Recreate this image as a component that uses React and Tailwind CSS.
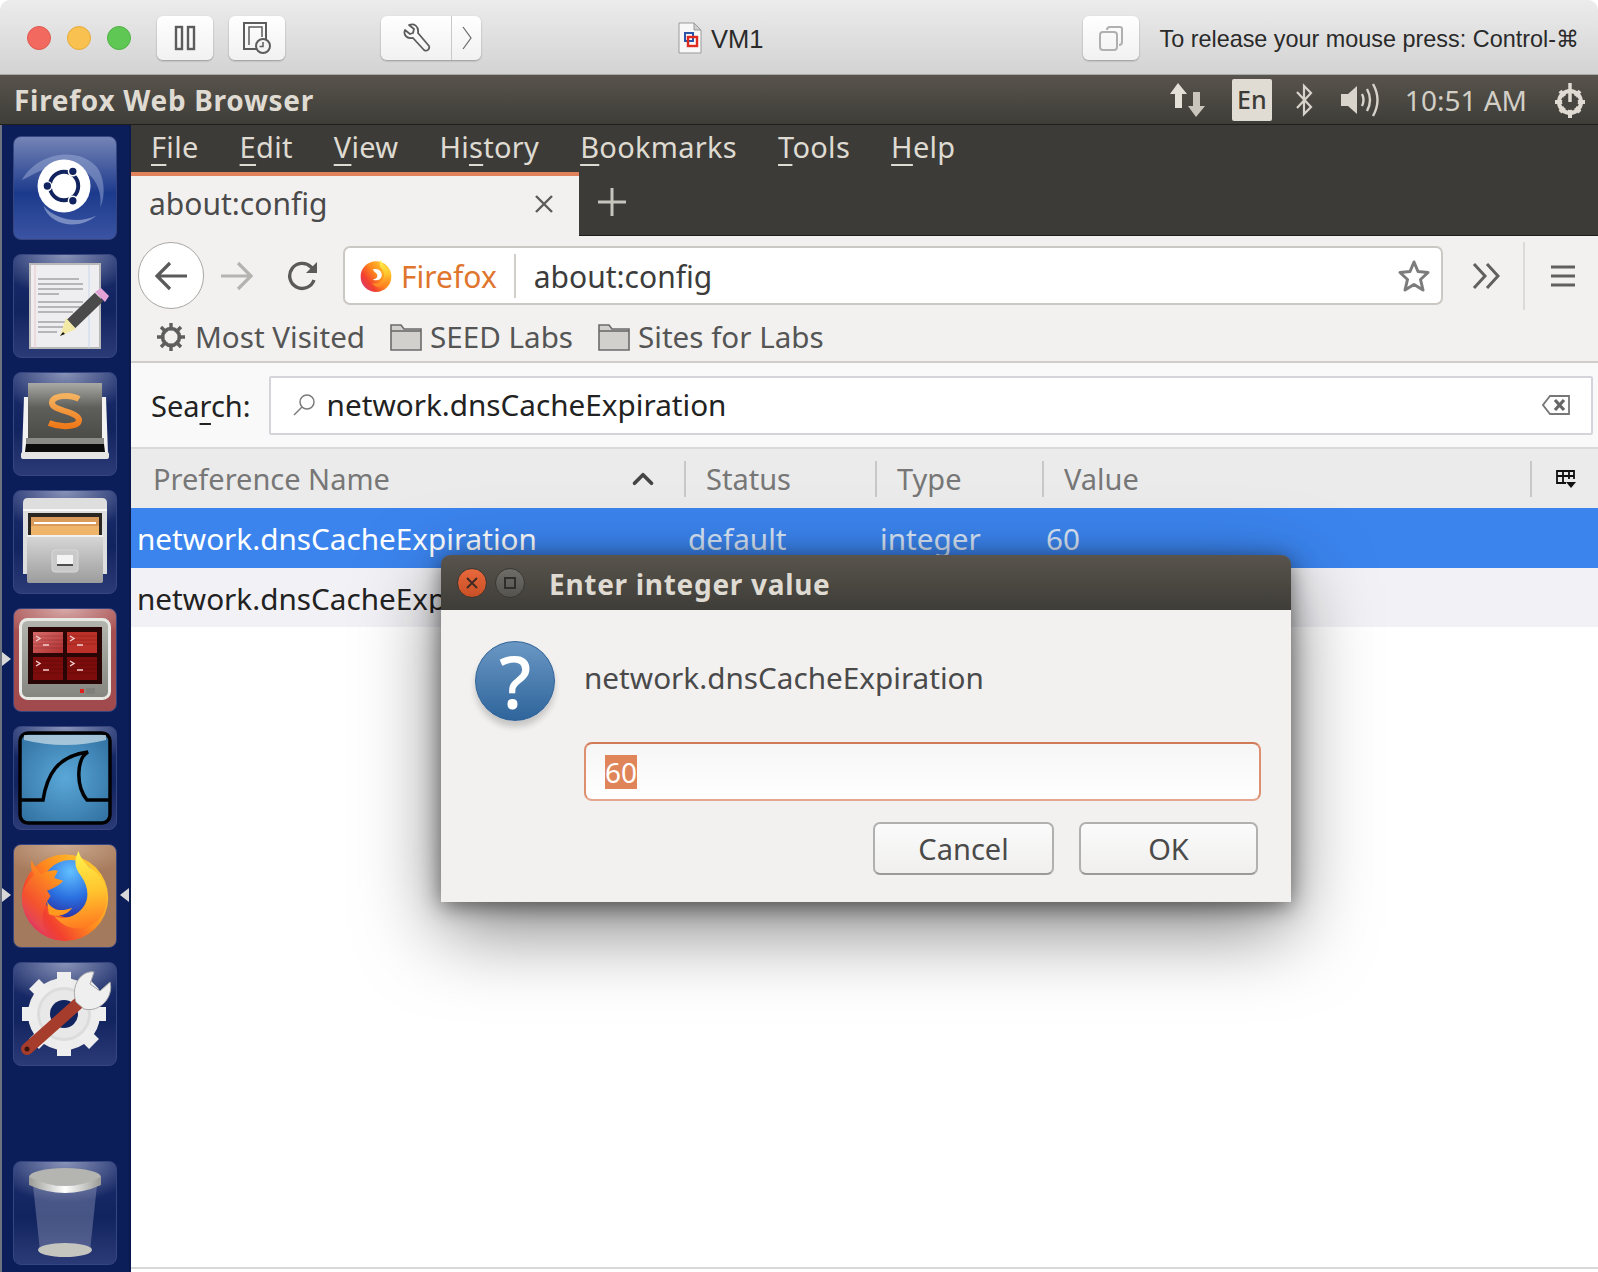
import { ChevronUp } from 'lucide-react';

const Mnemonic = ({ children }) => (
  <span className="underline decoration-2 underline-offset-[6px]">{children}</span>
);

const MacButton = ({ children, className = 'w-[56px]' }) => (
  <div className={`h-[44px] rounded-[6px] bg-gradient-to-b from-[#ffffff] to-[#f1f1f1] shadow-[0_1px_2px_rgba(0,0,0,0.3)] flex items-center justify-center ${className}`}>
    {children}
  </div>
);

// Firefox logo, also used small in the url bar
const FirefoxLogo = ({ size, id, small }) => (
  <svg width={size} height={size} viewBox="0 0 100 100">
    <defs>
      <radialGradient id={`${id}-globe`} cx="0.5" cy="0.2" r="0.85">
        <stop offset="0" stopColor="#62c0ff" />
        <stop offset="0.55" stopColor="#2a6fe0" />
        <stop offset="1" stopColor="#2b2a9c" />
      </radialGradient>
      <linearGradient id={`${id}-disc`} x1="0.95" y1="0.35" x2="0.15" y2="0.95">
        <stop offset="0" stopColor="#ffc42e" />
        <stop offset="0.4" stopColor="#ff8a1e" />
        <stop offset="0.75" stopColor="#f2402f" />
        <stop offset="1" stopColor="#dd3a6a" />
      </linearGradient>
      <linearGradient id={`${id}-fox`} x1="0.7" y1="0.1" x2="0.2" y2="1">
        <stop offset="0" stopColor="#ff9a1e" />
        <stop offset="0.6" stopColor="#f4522e" />
        <stop offset="1" stopColor="#d93a74" />
      </linearGradient>
      <linearGradient id={`${id}-tail`} x1="0.4" y1="0" x2="0.5" y2="1">
        <stop offset="0" stopColor="#fff44f" />
        <stop offset="0.55" stopColor="#ffc42e" />
        <stop offset="1" stopColor="#ff7a20" />
      </linearGradient>
    </defs>
    <circle cx="50" cy="52" r="48" fill={`url(#${id}-disc)`} />
    {small ? (
      <path fill="#fff" d="M40 30 C56 24 70 36 68 50 C66 62 50 68 40 60 C50 60 56 54 54 46 C50 40 44 38 40 30 Z" />
    ) : (
      <circle cx="56" cy="42" r="32" fill={`url(#${id}-globe)`} />
    )}
    <path
      fill={`url(#${id}-tail)`}
      d="M65 0 C60 10 60 18 68 28 C78 42 78 60 62 70 C54 75 44 76 38 72 C52 92 80 90 92 70 C102 50 94 30 82 22 C74 16 68 10 65 0 Z"
    />
    {!small && (
      <>
        <path
          fill={`url(#${id}-fox)`}
          d="M13 10 C11 17 13 22 16 26 C6 35 2 45 2 52 C2 66 12 82 30 92 C22 78 24 64 34 50 L30 44 C36 42 44 38 48 33 L38 30 L42 22 C34 20 28 24 24 26 C20 22 15 16 13 10 Z"
        />
        <path fill="#ff9a1e" d="M30 56 C36 66 46 68 58 63 C52 72 40 74 32 70 Z" />
      </>
    )}
  </svg>
);

const Tile = ({ children, className = 'bg-[radial-gradient(ellipse_70%_40%_at_50%_0%,rgba(205,210,230,0.62),rgba(205,210,230,0)_100%),linear-gradient(#1a2c6c,#12245f_55%,#2b3b77)]' }) => (
  <div className={`w-[104px] h-[104px] rounded-[8px] border border-[#36447f] flex items-center justify-center shrink-0 overflow-hidden ${className}`}>
    {children}
  </div>
);

const Launcher = () => (
  <div className="relative w-[131px] shrink-0 bg-[#0b1e5a] border-l-2 border-l-[#6d7280] border-r-2 border-r-[#0a1a4c] flex flex-col items-center pt-[11px] pb-[7px] gap-[14px] pr-[2px]">
    {/* dash */}
    <Tile className="bg-[linear-gradient(#7584b6,#1c3a8c_55%,#3b54a3)]">
      <svg width="104" height="104" viewBox="0 0 104 104">
        <path d="M8 44C22 18 62 8 84 30C92 40 94 58 88 72C92 42 66 22 38 30C26 34 16 40 8 44Z" fill="#a9b8de" opacity="0.45" />
        <path d="M30 70C36 90 66 96 84 80C68 88 44 86 30 70Z" fill="#b4c2e4" opacity="0.55" />
        <circle cx="51" cy="50" r="27" fill="#fff" />
        <circle cx="51" cy="50" r="14.5" fill="none" stroke="#12245f" strokeWidth="4" />
        <circle cx="34" cy="50" r="4.5" fill="#12245f" stroke="#fff" strokeWidth="1.5" />
        <circle cx="60" cy="35" r="4.5" fill="#12245f" stroke="#fff" strokeWidth="1.5" />
        <circle cx="60" cy="65" r="4.5" fill="#12245f" stroke="#fff" strokeWidth="1.5" />
      </svg>
    </Tile>
    {/* text editor */}
    <Tile>
      <svg width="88" height="88" viewBox="0 0 88 88">
        <rect x="9" y="2" width="70" height="84" fill="#eeeef0" stroke="#b8b8b8" strokeWidth="2" />
        <path d="M14 3V86" stroke="#eec4c8" strokeWidth="1" />
        <path d="M68 3V86" stroke="#ccd6ee" strokeWidth="1" />
        <path d="M17 17H58M17 22H62M17 27H62M17 32H38M17 40H62M17 45H60M17 50H52M17 60H46M17 65H42M17 70H36" stroke="#a4a4a8" strokeWidth="1.6" />
        <path d="M78 35L50 62" stroke="#4a4a4a" strokeWidth="12" />
        <path d="M74 30L84 40L88 34L80 26Z" fill="#e4a3d6" />
        <path d="M45 56L55 67L39 74Z" fill="#f1e9a4" />
        <path d="M42 70L44 72L39 74Z" fill="#111" />
      </svg>
    </Tile>
    {/* sublime text */}
    <Tile>
      <svg width="92" height="92" viewBox="0 0 92 92">
        <defs>
          <linearGradient id="sublime-top" x1="0" y1="0" x2="0" y2="1">
            <stop offset="0" stopColor="#a9a9a5" />
            <stop offset="0.45" stopColor="#5e5e5a" />
            <stop offset="1" stopColor="#4b4b48" />
          </linearGradient>
          <linearGradient id="sublime-s" x1="0" y1="0" x2="0" y2="1">
            <stop offset="0" stopColor="#f4b25f" />
            <stop offset="1" stopColor="#f07a1a" />
          </linearGradient>
        </defs>
        <path d="M5 19H87L89 76H3Z" fill="#f2f2f2" />
        <rect x="2" y="74" width="88" height="7" rx="2" fill="#e4e4e4" />
        <rect x="9" y="5" width="74" height="55" fill="url(#sublime-top)" />
        <path d="M7 60H85V66H7Z" fill="#8a8a86" />
        <path d="M7 66H85L86 74H6Z" fill="#0c0c0c" />
        <path d="M60 21C52 16 33 17 33 25C33 33 59 33 60 42C60 49 42 50 30 45" fill="none" stroke="url(#sublime-s)" strokeWidth="6" />
      </svg>
    </Tile>
    {/* file manager */}
    <Tile>
      <svg width="88" height="92" viewBox="0 0 88 92">
        <defs>
          <linearGradient id="drawer-body" x1="0" y1="0" x2="0" y2="1">
            <stop offset="0" stopColor="#d8d8d8" />
            <stop offset="1" stopColor="#9c9c9c" />
          </linearGradient>
        </defs>
        <path d="M2 7Q2 2 7 2H81Q86 2 86 7V78H2Z" fill="#dedede" />
        <rect x="2" y="13" width="84" height="2" fill="#f8f8f8" />
        <rect x="7" y="17" width="74" height="22" fill="#2a2622" />
        <rect x="10" y="21" width="68" height="18" fill="#d99a5a" />
        <rect x="10" y="30" width="68" height="9" fill="#eeb56a" />
        <rect x="13" y="26" width="62" height="2" fill="#fff" />
        <rect x="6" y="39" width="76" height="48" rx="2" fill="url(#drawer-body)" />
        <rect x="6" y="39" width="76" height="2" fill="#f0f0f0" />
        <rect x="31" y="54" width="26" height="22" rx="3" fill="#c9c9c9" stroke="#d8d8d8" />
        <rect x="36" y="59" width="16" height="11" fill="#f4f4f4" />
        <rect x="36" y="68" width="16" height="2" fill="#4e4e4e" />
      </svg>
    </Tile>
    {/* terminal */}
    <Tile className="bg-[radial-gradient(ellipse_70%_30%_at_50%_0%,#d7a9a9,rgba(215,169,169,0)_100%),linear-gradient(#a85050,#a04a4e)]">
      <svg width="92" height="84" viewBox="0 0 92 84">
        <defs>
          <linearGradient id="term-a" x1="0" y1="0" x2="1" y2="1">
            <stop offset="0" stopColor="#d86a6a" />
            <stop offset="1" stopColor="#b03030" />
          </linearGradient>
          <linearGradient id="term-frame" x1="0" y1="0" x2="0" y2="1">
            <stop offset="0" stopColor="#b5b5b0" />
            <stop offset="1" stopColor="#85857f" />
          </linearGradient>
        </defs>
        <rect x="1.5" y="1.5" width="89" height="79" rx="7" fill="url(#term-frame)" stroke="#e8e8e4" strokeWidth="3" />
        <rect x="9" y="9" width="74" height="57" fill="#2a0505" />
        <rect x="14" y="14" width="30" height="21" fill="url(#term-a)" />
        <rect x="48" y="14" width="30" height="21" fill="#bb3028" />
        <rect x="14" y="39" width="30" height="23" fill="#7d0d0d" />
        <rect x="48" y="39" width="30" height="23" fill="#7d0d0d" />
        <path d="M14 18H44M14 22H44M14 26H44M14 30H44M48 18H78M48 22H78M48 26H78M14 43H44M14 47H44M14 51H44M14 55H44M48 43H78M48 47H78M48 51H78M48 55H78" stroke="#000" strokeWidth="1" opacity="0.15" />
        <path d="M17 18L21 20.5L17 23M24 27H30M51 18L55 20.5L51 23M58 27H64M17 43L21 45.5L17 48M24 52H30M51 43L55 45.5L51 48M58 52H64" fill="none" stroke="#f5d0d0" strokeWidth="1.4" />
        <rect x="61" y="71" width="4" height="4" fill="#e32020" />
        <rect x="67" y="70" width="9" height="6" fill="#7e7e7a" />
      </svg>
    </Tile>
    {/* wireshark */}
    <Tile>
      <svg width="96" height="96" viewBox="0 0 96 96">
        <defs>
          <radialGradient id="shark-bg" cx="0.5" cy="0.5" r="0.7">
            <stop offset="0" stopColor="#5aa8d8" />
            <stop offset="1" stopColor="#2f6e9e" />
          </radialGradient>
        </defs>
        <rect x="3" y="3" width="90" height="90" rx="8" fill="url(#shark-bg)" stroke="#000" strokeWidth="3.5" />
        <path d="M7 5H89V10Q48 20 7 10Z" fill="#cfe0ea" opacity="0.7" />
        <path d="M3 70H26C30 45 40 26 71 22C60 28 58 55 70 70H93" fill="none" stroke="#000" strokeWidth="3.5" />
      </svg>
    </Tile>
    {/* firefox, the running app */}
    <Tile className="bg-[radial-gradient(ellipse_70%_30%_at_50%_0%,#cba98f,rgba(203,169,143,0)_100%),linear-gradient(#a87b5c,#a37a5e)]">
      <FirefoxLogo size={90} id="launcher-fx" />
    </Tile>
    {/* system settings */}
    <Tile>
      <svg width="94" height="94" viewBox="0 0 94 94">
        <circle cx="46" cy="47" r="26" fill="none" stroke="#ececec" strokeWidth="20" />
        <path d="M46 47L46 5M46 47L46 89M46 47L4 47M46 47L88 47M46 47L16 17M46 47L76 77M46 47L16 77M46 47L76 17" stroke="#eeeeee" strokeWidth="14" />
        <circle cx="46" cy="47" r="27" fill="#dcdcdc" />
        <circle cx="46" cy="47" r="24" fill="#e8e8e8" />
        <circle cx="46" cy="47" r="14" fill="#12245f" />
        <path d="M9 82L64 33" stroke="#a63c2b" strokeWidth="12" strokeLinecap="round" />
        <circle cx="9" cy="82" r="2.5" fill="#3a1510" />
        <path d="M58 35C52 18 64 3 76 5L72 17L82 24L92 15C96 30 82 46 66 42Z" fill="#efefef" stroke="#a8a8a8" />
      </svg>
    </Tile>
    <div className="flex-1" />
    {/* trash */}
    <Tile>
      <svg width="80" height="96" viewBox="0 0 80 96">
        <defs>
          <linearGradient id="trash-band" x1="0" y1="0" x2="1" y2="0">
            <stop offset="0" stopColor="#9a9a96" />
            <stop offset="0.5" stopColor="#ffffff" />
            <stop offset="1" stopColor="#9a9a96" />
          </linearGradient>
        </defs>
        <path d="M8 20H72L65 86H15Z" fill="#aab0cc" opacity="0.35" />
        <ellipse cx="40" cy="85" rx="27" ry="7" fill="#c5c5c0" />
        <ellipse cx="40" cy="12" rx="36" ry="9" fill="#b4b4b0" />
        <path d="M4 12Q40 30 76 12V20Q40 36 4 20Z" fill="url(#trash-band)" />
      </svg>
    </Tile>
    {/* running app markers */}
    <div className="absolute left-0 top-[527px] w-0 h-0 border-y-[7px] border-y-transparent border-l-[9px] border-l-[#d8d8d8]" />
    <div className="absolute left-0 top-[763px] w-0 h-0 border-y-[7px] border-y-transparent border-l-[9px] border-l-[#d8d8d8]" />
    <div className="absolute right-0 top-[763px] w-0 h-0 border-y-[7px] border-y-transparent border-r-[9px] border-r-[#d8d8d8]" />
  </div>
);

const App = () => {
  return (
    <div className="relative w-[1598px] h-[1272px] flex flex-col bg-white overflow-hidden rounded-t-[10px] font-['Noto_Sans',sans-serif]">
      {/* Mac window title bar */}
      <div className="relative h-[75px] shrink-0 flex items-center pt-[2px] bg-gradient-to-b from-[#ececec] to-[#d3d3d3] border-b border-b-[#a9a9a9] font-['Liberation_Sans',sans-serif]">
        <div className="ml-[27px] flex gap-[16px]">
          <div className="w-[24px] h-[24px] rounded-full bg-[#f2695f] border border-[#df5a50]" />
          <div className="w-[24px] h-[24px] rounded-full bg-[#f9c14f] border border-[#e5ab3b]" />
          <div className="w-[24px] h-[24px] rounded-full bg-[#5fc854] border border-[#50b046]" />
        </div>
        <div className="ml-[26px] flex gap-[16px]">
          <MacButton>
            <svg width="22" height="26" viewBox="0 0 22 26" fill="none" stroke="#5c5c5c" strokeWidth="2.4">
              <rect x="2" y="2" width="6" height="22" />
              <rect x="14" y="2" width="6" height="22" />
            </svg>
          </MacButton>
          <MacButton>
            <svg width="30" height="32" viewBox="0 0 30 32" fill="none" stroke="#5c5c5c" strokeWidth="2">
              <path d="M15 27H2V1H24V18" />
              <path d="M7 23V5H20V15" strokeWidth="1.5" />
              <circle cx="21" cy="24" r="7" fill="#f4f4f4" />
              <path d="M21 20V24.5H17.5" strokeWidth="1.5" />
            </svg>
          </MacButton>
        </div>
        <div className="ml-[96px] flex w-[100px] h-[44px] rounded-[6px] bg-gradient-to-b from-[#ffffff] to-[#f1f1f1] shadow-[0_1px_2px_rgba(0,0,0,0.3)]">
          <div className="w-[71px] flex items-center justify-center border-r border-r-[#c9c9c9]">
            <svg width="30" height="30" viewBox="0 0 30 30" fill="none" stroke="#5c5c5c" strokeWidth="1.8" strokeLinejoin="round">
              <path d="M4 7L9 11L12 10L13 6L8 2C13 0 18 3 17 10L28 23C29 26 26 29 23 27L12 15C6 16 2 12 4 7Z" />
            </svg>
          </div>
          <div className="flex-1 flex items-center justify-center">
            <svg width="12" height="26" viewBox="0 0 12 26" fill="none" stroke="#666" strokeWidth="1.2">
              <path d="M2 2L10 13L2 24" />
            </svg>
          </div>
        </div>
        <div className="ml-[197px] flex items-center gap-[9px]">
          <svg width="24" height="32" viewBox="0 0 24 32">
            <path d="M1 1H16L23 8V31H1Z" fill="#f8f8f8" stroke="#9a9a9a" />
            <path d="M16 1V8H23Z" fill="#d0d0d0" stroke="#9a9a9a" />
            <rect x="7" y="11" width="8" height="8" fill="none" stroke="#2b55a8" strokeWidth="2" />
            <rect x="10" y="15" width="9" height="9" fill="none" stroke="#e02a20" strokeWidth="2.4" />
          </svg>
          <span className="mt-[4px] text-[25.5px] leading-none text-[#2a2a2a]">VM1</span>
        </div>
        <div className="ml-[320px]">
          <MacButton>
            <svg width="26" height="26" viewBox="0 0 26 26" fill="none" stroke="#b0b0b0" strokeWidth="2">
              <path d="M9 5Q9 2 12 2H22Q24 2 24 4V17Q24 20 21 20" />
              <rect x="2" y="7" width="17" height="18" rx="3" />
            </svg>
          </MacButton>
        </div>
        <span className="ml-[20px] mt-[4px] text-[23.4px] leading-none text-[#2a2a2a] whitespace-nowrap">
          To release your mouse press: Control-⌘
        </span>
      </div>

      {/* Ubuntu top panel */}
      <div className="h-[50px] shrink-0 flex items-center bg-gradient-to-b from-[#58544d] to-[#3f3d38] border-b border-b-[#1f1e1b] text-[#dfdbd2]">
        <span className="ml-[14px] text-[28px] tracking-[0.7px] font-bold leading-none whitespace-nowrap">Firefox Web Browser</span>
        <div className="ml-auto flex items-center">
          <svg width="36" height="36" viewBox="0 0 36 36" fill="#e4e0d8">
            <path d="M9 1L18 12H13V26H6V12H1Z" />
            <path d="M27 35L36 24H31V10H24V24H19Z" fill="#c9c5bd" />
          </svg>
          <div className="ml-[27px] w-[40px] h-[42px] bg-[#e0dcd4] rounded-[2px] text-[#3c3b37] text-[25px] font-medium flex items-center justify-center leading-none">En</div>
          <svg className="ml-[23px]" width="18" height="34" viewBox="0 0 18 34" fill="none" stroke="#d8d4cc" strokeWidth="2.2">
            <path d="M2 9L16 24L9 31V3L16 10L2 25" />
          </svg>
          <svg className="ml-[27px]" width="40" height="36" viewBox="0 0 40 36" fill="none" stroke="#d8d4cc" strokeWidth="2.4">
            <path d="M1 12H8L17 4V32L8 24H1Z" fill="#d8d4cc" stroke="none" />
            <path d="M22 12Q25 18 22 24M27 7Q33 18 27 29M33 2Q42 18 33 34" />
          </svg>
          <span className="ml-[25px] text-[28px] leading-none text-[#d3cfc7] whitespace-nowrap">10:51 AM</span>
          <svg className="ml-[27px] mr-[12px]" width="32" height="36" viewBox="0 0 32 36">
            <circle cx="16" cy="20" r="11" fill="none" stroke="#dfdbd2" strokeWidth="4" />
            <path d="M16 20L16 37M16 20L1 20M16 20L31 20M16 20L6 30M16 20L26 30M16 20L6 9M16 20L26 9" stroke="#dfdbd2" strokeWidth="4" />
            <circle cx="16" cy="20" r="8" fill="#47453f" />
            <path d="M16 1V20" stroke="#dfdbd2" strokeWidth="3.5" />
          </svg>
        </div>
      </div>

      <div className="flex-1 flex min-h-0">
        <Launcher />

        {/* Firefox window */}
        <div className="flex-1 min-w-0 flex flex-col">
          {/* Menu bar */}
          <div className="h-[47px] shrink-0 bg-[#3c3b37] flex items-center pl-[20px] pb-[5px] gap-[41px] text-[29px] tracking-[0.3px] leading-none text-[#dfdbd2]">
            <span><Mnemonic>F</Mnemonic>ile</span>
            <span><Mnemonic>E</Mnemonic>dit</span>
            <span><Mnemonic>V</Mnemonic>iew</span>
            <span>Hi<Mnemonic>s</Mnemonic>tory</span>
            <span><Mnemonic>B</Mnemonic>ookmarks</span>
            <span><Mnemonic>T</Mnemonic>ools</span>
            <span><Mnemonic>H</Mnemonic>elp</span>
          </div>

          {/* Tab strip */}
          <div className="h-[64px] shrink-0 bg-[#3c3b37] border-b border-b-[#1f1e1b] flex">
            <div className="w-[448px] h-[64px] bg-[#f2f1f0] border-t-[4px] border-t-[#e0825c] flex items-center pl-[18px] pr-[25px] pb-[5px] justify-between">
              <span className="text-[30px] leading-none text-[#4a4a4a]">about:config</span>
              <svg width="20" height="20" viewBox="0 0 20 20" stroke="#5c5c5c" strokeWidth="2.4">
                <path d="M2 2L18 18M18 2L2 18" />
              </svg>
            </div>
            <svg className="ml-[19px] self-center mb-[4px]" width="28" height="28" viewBox="0 0 28 28" stroke="#c8c5be" strokeWidth="3">
              <path d="M14 0V28M0 14H28" />
            </svg>
          </div>

          {/* Navigation toolbar */}
          <div className="h-[74px] shrink-0 bg-[#f2f1f0] flex items-center pt-[5px]">
            <div className="ml-[7px] w-[66px] h-[67px] rounded-full bg-white border border-[#a9a7a3] flex items-center justify-center">
              <svg width="34" height="30" viewBox="0 0 34 30" fill="none" stroke="#5a5a5a" strokeWidth="3.2">
                <path d="M33 15H3M16 2L3 15L16 28" />
              </svg>
            </div>
            <svg className="ml-[16px]" width="34" height="30" viewBox="0 0 34 30" fill="none" stroke="#b5b3af" strokeWidth="3.2">
              <path d="M1 15H31M18 2L31 15L18 28" />
            </svg>
            <svg className="ml-[33px]" width="32" height="32" viewBox="0 0 32 32" fill="none" stroke="#5a5a5a" strokeWidth="3.4">
              <path d="M27 20A12.5 12.5 0 1 1 24 7L28 11" />
              <path d="M30 2V13H19Z" fill="#5a5a5a" stroke="none" />
            </svg>
            <div className="ml-[24px] w-[1100px] h-[59px] rounded-[7px] bg-white border-2 border-[#cbc8c3] flex items-center">
              <div className="ml-[15px] flex items-center">
                <FirefoxLogo size={32} id="url-fx" small />
              </div>
              <span className="ml-[9px] mt-[3px] text-[30px] leading-none text-[#e0752e]">Firefox</span>
              <div className="ml-[17px] w-[2px] h-[44px] bg-[#d2cfca]" />
              <span className="ml-[18px] mt-[3px] text-[30px] leading-none text-[#3c3c3c]">about:config</span>
              <svg className="ml-auto mr-[11px]" width="32" height="32" viewBox="0 0 32 32" fill="none" stroke="#7c7c7c" strokeWidth="3" strokeLinejoin="round">
                <path d="M16 2L20 11.5L30 12.5L22.5 19.5L25 30L16 24.5L7 30L9.5 19.5L2 12.5L12 11.5Z" />
              </svg>
            </div>
            <svg className="ml-[29px]" width="28" height="26" viewBox="0 0 28 26" fill="none" stroke="#606060" strokeWidth="3">
              <path d="M2 1L13 13L2 25M15 1L26 13L15 25" />
            </svg>
            <div className="ml-[23px] w-[2px] h-[68px] bg-[#dcdad6]" />
            <svg className="ml-[26px]" width="24" height="24" viewBox="0 0 24 24" stroke="#606060" strokeWidth="3">
              <path d="M0 3H24M0 12H24M0 21H24" />
            </svg>
          </div>

          {/* Bookmarks toolbar */}
          <div className="h-[53px] shrink-0 bg-[#f2f1f0] border-b-2 border-b-[#cfcdc9] flex items-center pt-[3px] text-[29.6px] leading-none text-[#555555]">
            <svg className="ml-[26px]" width="28" height="28" viewBox="0 0 28 28">
              <circle cx="14" cy="14" r="8.5" fill="none" stroke="#5e5e5e" strokeWidth="3.6" />
              <path d="M14 14L14 0M14 14L14 28M14 14L0 14M14 14L28 14M14 14L4 4M14 14L24 24M14 14L4 24M14 14L24 4" stroke="#5e5e5e" strokeWidth="3.4" />
              <circle cx="14" cy="14" r="6.5" fill="#f2f1f0" />
            </svg>
            <span className="ml-[10px]">Most Visited</span>
            <svg className="ml-[25px]" width="32" height="28" viewBox="0 0 32 28" fill="#d2d0cc" stroke="#6b6b6b" strokeWidth="1.6">
              <path d="M1 27V2H11L14 6H31V27Z" />
              <path d="M1 8H31" fill="none" />
            </svg>
            <span className="ml-[8px]">SEED Labs</span>
            <svg className="ml-[25px]" width="32" height="28" viewBox="0 0 32 28" fill="#d2d0cc" stroke="#6b6b6b" strokeWidth="1.6">
              <path d="M1 27V2H11L14 6H31V27Z" />
              <path d="M1 8H31" fill="none" />
            </svg>
            <span className="ml-[8px]">Sites for Labs</span>
          </div>

          {/* about:config search */}
          <div className="h-[86px] shrink-0 bg-[#f9f9f9] border-b-2 border-b-[#dadada] flex items-center">
            <span className="ml-[20px] text-[29px] leading-none text-[#222222]">Sea<Mnemonic>r</Mnemonic>ch:</span>
            <div className="ml-[18px] w-[1324px] h-[59px] bg-white border-2 border-[#d5d4da] rounded-[2px] flex items-center">
              <svg className="ml-[21px]" width="24" height="24" viewBox="0 0 24 24" fill="none" stroke="#7a7a7a" strokeWidth="1.5">
                <circle cx="15" cy="9" r="7" />
                <path d="M10 14L2 22" />
              </svg>
              <span className="ml-[11px] text-[29.7px] leading-none text-[#222222]">network.dnsCacheExpiration</span>
              <svg className="ml-auto mr-[21px]" width="28" height="20" viewBox="0 0 28 20">
                <path d="M8 1H27V19H8L1 10Z" fill="none" stroke="#777" strokeWidth="1.8" />
                <path d="M13 5L22 15M22 5L13 15" stroke="#666" strokeWidth="3.2" />
              </svg>
            </div>
          </div>

          {/* Preference table header */}
          <div className="h-[59px] shrink-0 bg-[#ebebeb] grid grid-cols-[553px_191px_167px_488px_1fr] items-center text-[29px] leading-none text-[#777777]">
            <div className="pl-[22px] pr-[24px] flex items-center justify-between">
              <span>Preference Name</span>
              <ChevronUp size={34} strokeWidth={2.6} className="text-[#444444]" />
            </div>
            <div className="h-[36px] flex items-center pl-[20px] border-l-2 border-l-[#c8c8c8]">Status</div>
            <div className="h-[36px] flex items-center pl-[20px] border-l-2 border-l-[#c8c8c8]">Type</div>
            <div className="h-[36px] flex items-center pl-[20px] border-l-2 border-l-[#c8c8c8]">Value</div>
            <div className="h-[36px] flex items-center pl-[24px] border-l-2 border-l-[#c8c8c8]">
              <svg width="20" height="18" viewBox="0 0 20 18" fill="none" stroke="#111" strokeWidth="1.8">
                <path d="M10 13H1V1H18V9M1 6H18M7 1V13M13 1V9" />
                <path d="M10 12H20L15 18Z" fill="#111" stroke="none" />
              </svg>
            </div>
          </div>

          {/* Preference rows */}
          <div className="h-[60px] shrink-0 bg-[#3b84ee] grid grid-cols-[551px_192px_166px_1fr] items-center pl-[6px] pt-[2px] text-[29.7px] leading-none text-[#d8e4f6]">
            <span className="text-white whitespace-nowrap">network.dnsCacheExpiration</span>
            <span>default</span>
            <span>integer</span>
            <span>60</span>
          </div>
          {/* second row runs under the dialog, only its start shows */}
          <div className="h-[59px] shrink-0 bg-[#f2f2f6] flex items-center pl-[6px] pt-[2px] text-[29.7px] leading-none text-[#222222]">
            <span className="w-[304px] overflow-hidden whitespace-nowrap">network.dnsCacheExp</span>
          </div>
          <div className="flex-1 bg-white" />
          <div className="h-[5px] shrink-0 bg-white border-t-2 border-t-[#d8d8d8]" />
        </div>
      </div>

      {/* Integer prompt dialog */}
      <div className="absolute left-[441px] top-[555px] w-[850px] h-[347px] flex flex-col rounded-t-[9px] shadow-[0_4px_22px_rgba(0,0,0,0.5),0_26px_80px_rgba(0,0,0,0.5)]">
        <div className="h-[55px] shrink-0 rounded-t-[9px] bg-gradient-to-b from-[#58544d] to-[#3f3d38] flex items-center pl-[16px]">
          <div className="w-[30px] h-[30px] rounded-full bg-gradient-to-b from-[#e8693c] to-[#c84f25] border border-[#3a3733] flex items-center justify-center">
            <svg width="12" height="12" viewBox="0 0 12 12" stroke="#3c2a22" strokeWidth="1.8">
              <path d="M1 1L11 11M11 1L1 11" />
            </svg>
          </div>
          <div className="ml-[8px] w-[30px] h-[30px] rounded-full bg-gradient-to-b from-[#6f6d68] to-[#55534e] border border-[#3a3733] flex items-center justify-center">
            <div className="w-[12px] h-[12px] border-2 border-[#2f2e2b]" />
          </div>
          <span className="ml-[24px] mt-[2px] text-[28px] tracking-[0.7px] font-bold leading-none text-[#dfdbd2] whitespace-nowrap">Enter integer value</span>
        </div>
        <div className="flex-1 bg-[#f2f1f0] relative pl-[143px]">
          <div className="h-[132px] flex items-center pt-[4px]">
            <div className="absolute left-[34px] top-[31px] w-[80px] h-[80px] rounded-full bg-gradient-to-b from-[#6a97c4] to-[#2e659b] border border-[#2f6298] shadow-[0_6px_6px_rgba(0,0,0,0.18)] flex items-center justify-center text-white font-medium text-[72px] leading-none">?</div>
            <span className="text-[29.7px] leading-none text-[#4a4a4a]">network.dnsCacheExpiration</span>
          </div>
          <div className="w-[677px] h-[59px] rounded-[8px] border-2 border-t-[#d07a58] border-x-[#dd9070] border-b-[#e4a68e] bg-gradient-to-b from-[#f6f6f6] to-white flex items-center pl-[19px]">
            <span className="bg-[#e0855a] text-white text-[28px] leading-[34px]">60</span>
          </div>
          <div className="mt-[21px] ml-[289px] flex gap-[25px]">
            <div className="w-[181px] h-[53px] rounded-[7px] border-2 border-[#b0b0b0] border-b-[#9a9a9a] bg-gradient-to-b from-[#fbfbfb] to-[#f0efee] flex items-center justify-center text-[29px] leading-none text-[#4a4a4a]">Cancel</div>
            <div className="w-[179px] h-[53px] rounded-[7px] border-2 border-[#b0b0b0] border-b-[#9a9a9a] bg-gradient-to-b from-[#fbfbfb] to-[#f0efee] flex items-center justify-center text-[29px] leading-none text-[#4a4a4a]">OK</div>
          </div>
        </div>
      </div>
    </div>
  );
};

export default App;
